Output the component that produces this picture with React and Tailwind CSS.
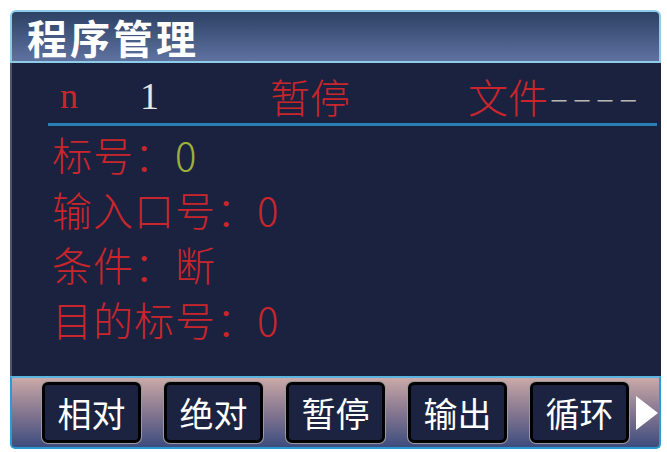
import React from "react";

const cjk = { fontFamily: '"Noto Sans CJK SC", "Noto Sans", sans-serif' };
const serif = { fontFamily: '"Liberation Serif", "DejaVu Serif", serif' };

const buttons = ["相对", "绝对", "暂停", "输出", "循环"];

const rows = [
  { label: "标号：", value: "0", green: true },
  { label: "输入口号：", value: "0" },
  { label: "条件：", value: "断" },
  { label: "目的标号：", value: "0" },
];

export default function App() {
  return (
    <div className="w-[667px] h-[452px] bg-white pt-[10px] pl-[10px]" style={cjk}>
      <div className="w-[651px] h-[439px] flex flex-col">
        {/* title bar */}
        <div className="h-[53px] shrink-0 rounded-t-[6px] border-2 border-[#8dcdea] bg-gradient-to-b from-[#2d4165] to-[#6072a0] flex items-center pl-[15px]">
          <span className="text-[40px] leading-none font-bold text-white tracking-[3px]">
            程序管理
          </span>
        </div>

        {/* main panel */}
        <div className="flex-1 bg-[#1a223f] border-l-2 border-[#4d566e] flex flex-col font-light">
          <div className="h-[50px] mt-[8px] flex items-center text-[40px] leading-none">
            <span className="ml-[48px] w-[80px] text-[#c8262c] text-[36px]" style={serif}>
              n
            </span>
            <span className="w-[130px] text-[#e6e6e6] text-[38px]" style={serif}>
              1
            </span>
            <span className="w-[198px] text-[#c8262c]">暂停</span>
            <span className="text-[#c8262c]">文件</span>
            <span className="text-[#b8b8b8] text-[34px] tracking-[5px] ml-[2px]">––––</span>
          </div>
          <div className="ml-[36px] mr-[4px] mt-[2px] h-[3px] bg-[#2a80b6]" />
          <div className="flex flex-col ml-[40px] mt-[5px] gap-[10px]">
            {rows.map((r) => (
              <div key={r.label} className="h-[45px] flex items-center text-[40px] leading-none text-[#c8262c] tracking-[1px]">
                <span>{r.label}</span>
                <span className={r.green ? "text-[#9bb13c]" : ""}>{r.value}</span>
              </div>
            ))}
          </div>
        </div>

        {/* soft key bar */}
        <div className="h-[73px] shrink-0 border-t-2 border-t-[#5ab4e0] border-x-2 border-b-2 border-[#2a9ad6] rounded-b-[5px] bg-gradient-to-b from-[#cba9a8] via-[#85768f] to-[#3d4c7e] flex items-center pl-[30px] gap-[23px]">
          {buttons.map((b) => (
            <div
              key={b}
              className="w-[99px] h-[61px] rounded-[6px] border-[3px] border-black bg-[#1b2341] ring-1 ring-[#9a9a9a] flex items-center justify-center text-[34px] leading-none text-white"
            >
              {b}
            </div>
          ))}
          <svg width="22" height="34" viewBox="0 0 22 34" className="-ml-[16px]">
            <polygon points="0,0 22,17 0,34" fill="#ffffff" />
          </svg>
        </div>
      </div>
    </div>
  );
}
